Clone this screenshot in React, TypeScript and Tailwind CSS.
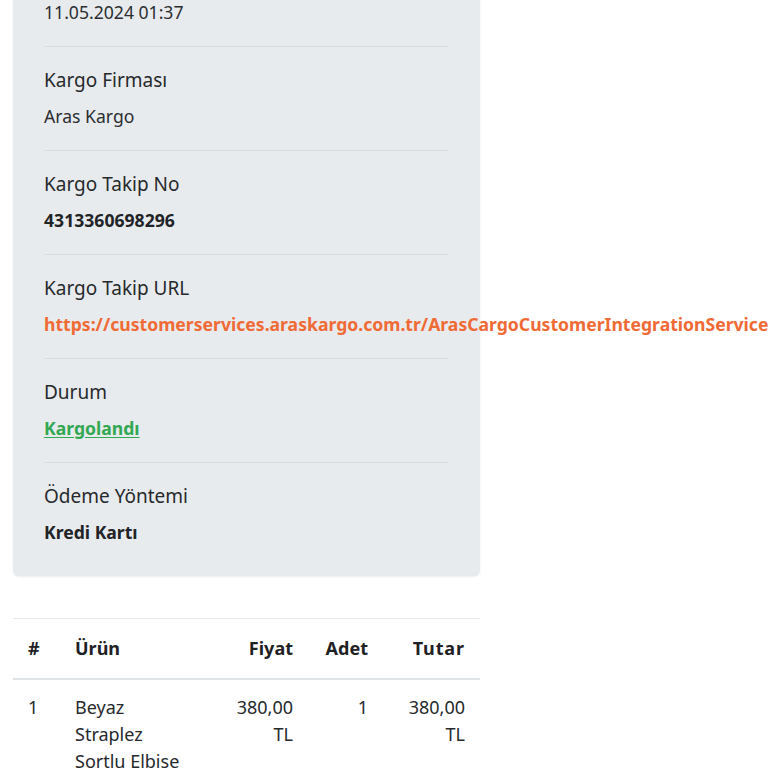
import React from "react";

const font = { fontFamily: "'Noto Sans', 'Open Sans', sans-serif" };

function Section({ label, children, last }: { label: string; children: React.ReactNode; last?: boolean }) {
  return (
    <div className={`py-5 ${last ? "" : "border-b border-[#d9dde1]"}`}>
      <div className="text-[19px] leading-[27px] text-[#26292c] mb-[9px]">{label}</div>
      {children}
    </div>
  );
}

export default function App() {
  return (
    <div className="w-[768px] h-[768px] overflow-hidden bg-white" style={font}>
      <div className="ml-[13px] w-[467px] bg-[#e8ebee] rounded-b-md shadow-[0_1px_2px_rgba(0,0,0,0.08)] px-[31px] pb-[10px]">
        <div className="-mt-[1px] pb-5 border-b border-[#d9dde1] text-[17.6px] leading-[27px] text-[#2b2e31]">11.05.2024 01:37</div>
        <Section label="Kargo Firması">
          <div className="text-[17.6px] leading-[27px] text-[#2b2e31]">Aras Kargo</div>
        </Section>
        <Section label="Kargo Takip No">
          <div className="text-[17.6px] leading-[27px] font-bold text-[#212326]">4313360698296</div>
        </Section>
        <Section label="Kargo Takip URL">
          <div className="text-[17.6px] leading-[27px] font-bold text-[#f06a35] whitespace-nowrap">https://customerservices.araskargo.com.tr/ArasCargoCustomerIntegrationService</div>
        </Section>
        <Section label="Durum">
          <div className="text-[17.6px] leading-[27px] font-bold text-[#33a852] underline underline-offset-2">Kargolandı</div>
        </Section>
        <Section label="Ödeme Yöntemi" last>
          <div className="text-[17.6px] leading-[27px] font-bold text-[#212326]">Kredi Kartı</div>
        </Section>
      </div>

      <table className="ml-[13px] mt-[42px] w-[467px] table-fixed border-collapse text-[18px] leading-[27px] text-[#26292c]">
        <colgroup>
          <col className="w-[47px]" />
          <col className="w-[155px]" />
          <col className="w-[93px]" />
          <col className="w-[75px]" />
          <col className="w-[97px]" />
        </colgroup>
        <thead>
          <tr className="border-t border-[#e3e6e9] border-b-2 border-b-[#e0e3e6]">
            <th className="pl-[15px] py-4 text-left font-bold text-[#1f2124]">#</th>
            <th className="pl-[15px] py-4 text-left font-bold text-[#1f2124]">Ürün</th>
            <th className="pr-[15px] py-4 text-right font-bold text-[#1f2124]">Fiyat</th>
            <th className="pr-[15px] py-4 text-right font-bold text-[#1f2124]">Adet</th>
            <th className="pr-[15px] py-4 text-right font-bold text-[#1f2124] tracking-[0.05em]">Tutar</th>
          </tr>
        </thead>
        <tbody>
          <tr className="align-top">
            <td className="pl-[15px] pt-[14px]">1</td>
            <td className="pl-[15px] pt-[14px]"><div className="w-[115px]">Beyaz Straplez Sortlu Elbise</div></td>
            <td className="pr-[15px] pt-[14px] text-right"><div className="ml-auto w-[62px]">380,00 TL</div></td>
            <td className="pr-[15px] pt-[14px] text-right">1</td>
            <td className="pr-[15px] pt-[14px] text-right"><div className="ml-auto w-[62px]">380,00 TL</div></td>
          </tr>
        </tbody>
      </table>
    </div>
  );
}
